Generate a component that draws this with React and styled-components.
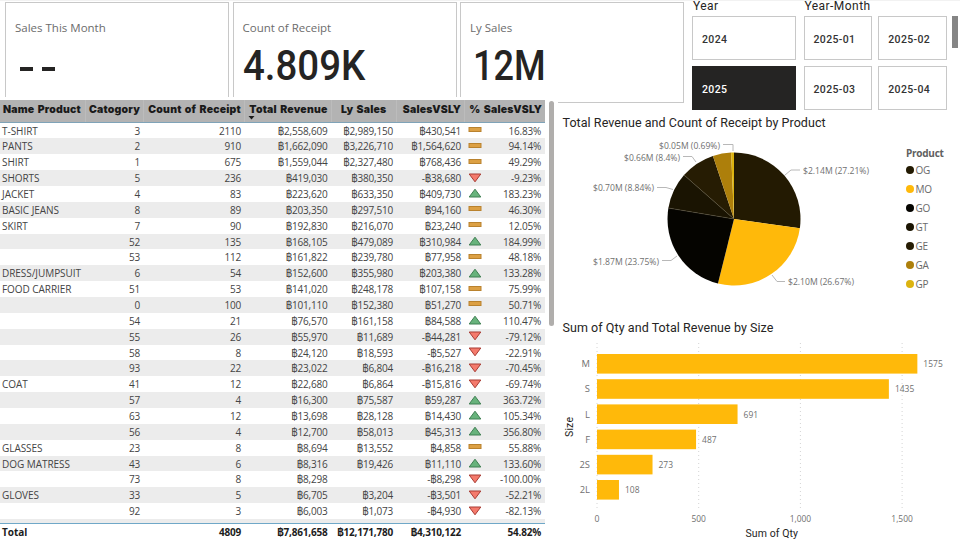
import React from "react";
import styled, { createGlobalStyle, css } from "styled-components";

const DIN = `Roboto, "Liberation Sans", sans-serif`;
const BODY = `"Open Sans", "Noto Sans", Inter, "DejaVu Sans", sans-serif`;

const GlobalStyle = createGlobalStyle`
  * {
    box-sizing: border-box;
  }
  body {
    margin: 0;
    background: #fff;
    overflow: hidden;
  }
`;

const Page = styled.main`
  width: 960px;
  height: 541px;
  display: flex;
  flex-direction: column;
  overflow: hidden;
  background: #fff;
  border-top: 1px solid #f2f2f2;
  font-family: ${BODY};
  color: #444;
`;

const TopBar = styled.div`
  display: flex;
  flex: none;
  height: 113px;
`;

const Cards = styled.section`
  display: flex;
  gap: 3.5px;
  width: 692px;
  height: 102px;
  padding: 1px 0 0 5px;
`;

const Card = styled.div`
  width: 224px;
  height: 101px;
  border: 1px solid #c8c8c8;
  padding: 15px 0 0 9px;
  background: #fff;
`;

const CardLabel = styled.div`
  font-size: 11.5px;
  line-height: 20px;
  color: #6c6c6c;
  white-space: nowrap;
`;

const CardValue = styled.div`
  font-family: ${DIN};
  font-weight: 500;
  font-size: 42px;
  line-height: 50px;
  margin: 3px 0 0 ${(p) => p.$indent || "0"};
  color: #252423;
  white-space: pre;
  transform: scaleX(${(p) => p.$stretch || 1});
  transform-origin: left center;
`;

const Dashes = styled.div`
  display: flex;
  gap: 9.5px;
  padding: 29px 0 0 5px;
`;

const Dash = styled.span`
  width: 12.5px;
  height: 4px;
  background: #252423;
`;

const Slicer = styled.section`
  width: ${(p) => p.$width};
  margin-right: ${(p) => p.$gap || "0"};
`;

const SlicerTitle = styled.h2`
  margin: 0 0 0 1px;
  height: 15px;
  font-family: ${DIN};
  font-weight: 400;
  font-size: 12px;
  line-height: 11px;
  letter-spacing: 0.45px;
  color: #252423;
  white-space: nowrap;
`;

const Tiles = styled.div`
  display: grid;
  grid-template-columns: repeat(${(p) => p.$cols}, 1fr);
  grid-auto-rows: 44px;
  gap: 6px;
`;

const Tile = styled.button`
  border: 1px solid #c8c8c8;
  margin: 0;
  padding: 2px 0 0 9px;
  background: #fff;
  text-align: left;
  font-family: ${DIN};
  font-weight: 500;
  font-size: 10.5px;
  letter-spacing: 0.35px;
  color: #333;

  ${(p) =>
    p.$active &&
    css`
      background: #252423;
      border-color: #252423;
      color: #fff;
    `}
`;

const SlicerScroll = styled.div`
  width: 6px;
  height: 32px;
  margin: 15px 0 0 5px;
  background: #858585;
`;

const Main = styled.div`
  display: flex;
  flex: none;
  height: 443px;
  margin-top: -17px;
`;

const TablePanel = styled.section`
  position: relative;
  display: flex;
  width: 558px;
  padding-top: 3px;
  background: #fff;
`;

const Table = styled.div`
  display: flex;
  flex-direction: column;
  width: 545px;
  height: 440px;
`;

const columns = css`
  display: grid;
  grid-template-columns: 86px 58px 101px 86.5px 65.5px 68px 80px;
`;

const HeadRow = styled.div`
  ${columns}
  flex: none;
  height: 22.5px;
  background: #b3b3b3;
  border-bottom: 1.5px solid #7fa3b8;
`;

const HeadCell = styled.div`
  padding: 0 3px 0 3px;
  border-right: 1px solid #bcbcbc;
  font-family: Inter, "Liberation Sans", sans-serif;
  font-weight: 900;
  font-size: 10.5px;
  line-height: 20px;
  letter-spacing: 0.2px;
  word-spacing: 1px;
  text-align: ${(p) => p.$align || "right"};
  color: #1a1a1a;
  white-space: nowrap;

  &:last-child {
    border-right: 0;
  }
`;

const SortMark = styled.svg`
  display: block;
  width: 7px;
  height: 4px;
  margin-top: -4px;
`;

const Rows = styled.div`
  flex: none;
  height: 401.5px;
  overflow: hidden;
  border-bottom: 1px solid #6fa8c8;
`;

const Row = styled.div`
  ${columns}
  height: 15.87px;
  background: ${(p) => (p.$shade ? "#ececec" : "#fff")};
`;

const Cell = styled.div`
  display: flex;
  align-items: center;
  justify-content: ${(p) => (p.$left ? "flex-start" : "flex-end")};
  padding: 1px ${(p) => p.$right || "4px"} 0 2px;
  font-size: 10px;
  line-height: 15px;
  letter-spacing: ${(p) => (p.$left ? "-0.05px" : "-0.2px")};
  white-space: nowrap;
`;

const Trend = styled.svg`
  flex: none;
  width: 14px;
  height: 10px;
  margin: -2px auto 0 1px;
`;

const TotalRow = styled.div`
  ${columns}
  height: 16px;
  font-weight: 700;
  color: #1c1c1c;
`;

const TableScroll = styled.div`
  width: 5px;
  height: 225px;
  margin: 1px 0 0 4px;
  border-radius: 3px;
  background: #b0aeac;
`;

const Charts = styled.section`
  width: 402px;
  padding-top: 17px;
`;

const ChartTitle = styled.h2`
  margin: 0 0 0 4.5px;
  font-family: ${DIN};
  font-weight: 400;
  font-size: 12.5px;
  height: 18px;
  line-height: 18px;
  letter-spacing: 0.06px;
  color: #252423;
  white-space: nowrap;
`;

const PieRow = styled.div`
  display: flex;
  height: 187px;
`;

const PieSvg = styled.svg`
  display: block;
  width: 340px;
  height: 160px;
`;

const Legend = styled.div`
  padding: 11px 0 0 8px;
  color: #6a6a6a;
`;

const LegendTitle = styled.div`
  font-size: 10px;
  font-weight: 700;
  line-height: 20px;
  height: 17px;
  letter-spacing: -0.25px;
  color: #606060;
`;

const LegendItem = styled.div`
  display: flex;
  align-items: center;
  gap: 1.5px;
  height: 19.15px;
  font-size: 10px;
  letter-spacing: -0.3px;
`;

const Dot = styled.i`
  width: 8px;
  height: 8px;
  border-radius: 50%;
  background: ${(p) => p.$color};
`;

const BarSvg = styled.svg`
  display: block;
  width: 402px;
  height: 204px;
`;

const SvgLabel = styled.text`
  font-family: ${BODY};
  font-size: 9.4px;
  fill: #707070;
`;

const AxisTitle = styled.text`
  font-family: ${DIN};
  font-size: 10.5px;
  fill: #252423;
`;

const rows = [
  ["T-SHIRT", "3", "2110", "฿2,558,609", "฿2,989,150", "฿430,541", "flat", "16.83%"],
  ["PANTS", "2", "910", "฿1,662,090", "฿3,226,710", "฿1,564,620", "flat", "94.14%"],
  ["SHIRT", "1", "675", "฿1,559,044", "฿2,327,480", "฿768,436", "flat", "49.29%"],
  ["SHORTS", "5", "236", "฿419,030", "฿380,350", "-฿38,680", "down", "-9.23%"],
  ["JACKET", "4", "83", "฿223,620", "฿633,350", "฿409,730", "up", "183.23%"],
  ["BASIC JEANS", "8", "89", "฿203,350", "฿297,510", "฿94,160", "flat", "46.30%"],
  ["SKIRT", "7", "90", "฿192,830", "฿216,070", "฿23,240", "flat", "12.05%"],
  ["", "52", "135", "฿168,105", "฿479,089", "฿310,984", "up", "184.99%"],
  ["", "53", "112", "฿161,822", "฿239,780", "฿77,958", "flat", "48.18%"],
  ["DRESS/JUMPSUIT", "6", "54", "฿152,600", "฿355,980", "฿203,380", "up", "133.28%"],
  ["FOOD CARRIER", "51", "53", "฿141,020", "฿248,178", "฿107,158", "flat", "75.99%"],
  ["", "0", "100", "฿101,110", "฿152,380", "฿51,270", "flat", "50.71%"],
  ["", "54", "21", "฿76,570", "฿161,158", "฿84,588", "up", "110.47%"],
  ["", "55", "26", "฿55,970", "฿11,689", "-฿44,281", "down", "-79.12%"],
  ["", "58", "8", "฿24,120", "฿18,593", "-฿5,527", "down", "-22.91%"],
  ["", "93", "22", "฿23,022", "฿6,804", "-฿16,218", "down", "-70.45%"],
  ["COAT", "41", "12", "฿22,680", "฿6,864", "-฿15,816", "down", "-69.74%"],
  ["", "57", "4", "฿16,300", "฿75,587", "฿59,287", "up", "363.72%"],
  ["", "63", "12", "฿13,698", "฿28,128", "฿14,430", "up", "105.34%"],
  ["", "56", "4", "฿12,700", "฿58,013", "฿45,313", "up", "356.80%"],
  ["GLASSES", "23", "8", "฿8,694", "฿13,552", "฿4,858", "flat", "55.88%"],
  ["DOG MATRESS", "43", "6", "฿8,316", "฿19,426", "฿11,110", "up", "133.60%"],
  ["", "73", "8", "฿8,298", "", "-฿8,298", "down", "-100.00%"],
  ["GLOVES", "33", "5", "฿6,705", "฿3,204", "-฿3,501", "down", "-52.21%"],
  ["", "92", "3", "฿6,003", "฿1,073", "-฿4,930", "down", "-82.13%"],
];

const slices = [
  { name: "OG", share: 27.21, color: "#231a02" },
  { name: "MO", share: 26.67, color: "#ffb90a" },
  { name: "GO", share: 23.75, color: "#050400" },
  { name: "GT", share: 8.84, color: "#1a1402" },
  { name: "GE", share: 8.4, color: "#261c03" },
  { name: "GA", share: 4.44, color: "#ad7f0b" },
  { name: "GP", share: 0.69, color: "#dcb30f" },
];

const pieLabels = [
  { text: "$2.14M (27.21%)", x: 803, y: 173.7, w: 66, line: "785,175 791,170 800,170" },
  { text: "$2.10M (26.67%)", x: 788, y: 285.2, w: 66, line: "772,275 777,281.5 785,281.5" },
  { text: "$1.87M (23.75%)", x: 593, y: 264.5, w: 66, line: "677,256 671,260.5 662,260.5" },
  { text: "$0.70M (8.84%)", x: 593, y: 191.2, w: 61, line: "673,189.5 666,187.5 657,187.5" },
  { text: "$0.66M (8.4%)", x: 624, y: 161, w: 56, line: "696,162 692,156.5 683,156.5" },
  { text: "$0.05M (0.69%)", x: 659, y: 148.5, w: 61, line: "733,151 733,144.5 723,144.5" },
];

const sizes = [
  { name: "M", qty: 1575 },
  { name: "S", qty: 1435 },
  { name: "L", qty: 691 },
  { name: "F", qty: 487 },
  { name: "2S", qty: 273 },
  { name: "2L", qty: 108 },
];

const ticks = [
  { value: 0, label: "0", w: 5 },
  { value: 500, label: "500", w: 14.5 },
  { value: 1000, label: "1,000", w: 21.5 },
  { value: 1500, label: "1,500", w: 21.5 },
];

const TrendIcon = ({ kind }) => (
  <Trend viewBox="0 0 14 10">
    {kind === "up" && (
      <path d="M7 1.2 L12.8 9 H1.2 Z" fill="#68b37c" stroke="#3f7f52" strokeWidth="1" />
    )}
    {kind === "down" && (
      <path d="M7 8.8 L1.2 1 H12.8 Z" fill="#f47a6c" stroke="#a83a32" strokeWidth="1" />
    )}
    {kind === "flat" && (
      <rect x="1" y="2.5" width="12" height="4" fill="#dca044" stroke="#b9822e" strokeWidth="1" />
    )}
  </Trend>
);

const point = (turn, r) => {
  const a = turn * 2 * Math.PI;
  return `${(734 + r * Math.sin(a)).toFixed(2)} ${(219 - r * Math.cos(a)).toFixed(2)}`;
};

const Pie = () => {
  let start = 0;
  return (
    <PieSvg viewBox="558 132 340 160">
      {slices.map((s) => {
        const end = start + s.share / 100;
        const d = `M734 219 L${point(start, 66.5)} A66.5 66.5 0 0 1 ${point(end, 66.5)} Z`;
        start = end;
        return <path key={s.name} d={d} fill={s.color} />;
      })}
      <path
        d={`M734 219 L${point(0.7763, 66.5)} M734 219 L${point(0.8647, 66.5)}`}
        stroke="#5c543c"
        strokeWidth="0.5"
      />
      {pieLabels.map((l) => (
        <g key={l.text}>
          <polyline points={l.line} fill="none" stroke="#b8b8b8" strokeWidth="1" />
          <SvgLabel x={l.x} y={l.y} textLength={l.w} lengthAdjust="spacingAndGlyphs">
            {l.text}
          </SvgLabel>
        </g>
      ))}
    </PieSvg>
  );
};

const Bars = () => {
  const scale = 0.2034;
  return (
    <BarSvg viewBox="558 337 402 204">
      {ticks.map((t) => {
        const x = 597 + t.value * scale;
        return (
          <g key={t.value}>
            <line x1={x} x2={x} y1="343" y2="510" stroke="#d4d4d4" strokeDasharray="1 3" />
            <SvgLabel
              x={x - t.w / 2}
              y="521.5"
              textLength={t.w}
              lengthAdjust="spacingAndGlyphs"
            >
              {t.label}
            </SvgLabel>
          </g>
        );
      })}
      {sizes.map((s, i) => {
        const y = 354 + i * 25.2;
        const end = 597 + s.qty * scale;
        return (
          <g key={s.name}>
            <rect x="597" y={y} width={s.qty * scale} height="19.6" fill="#ffb90a" />
            <SvgLabel x="590" y={y + 13.2} textAnchor="end">
              {s.name}
            </SvgLabel>
            <SvgLabel
              x={end + 6}
              y={y + 13.2}
              textLength={String(s.qty).length * 4.85}
              lengthAdjust="spacingAndGlyphs"
            >
              {s.qty}
            </SvgLabel>
          </g>
        );
      })}
      <AxisTitle x="745.5" y="536.5" textLength="52.5">
        Sum of Qty
      </AxisTitle>
      <AxisTitle transform="translate(572.5 437) rotate(-90)" textLength="20">
        Size
      </AxisTitle>
    </BarSvg>
  );
};

const App = () => {
  return (
    <Page>
      <GlobalStyle />
      <TopBar>
        <Cards>
          <Card>
            <CardLabel>Sales This Month</CardLabel>
            <Dashes>
              <Dash />
              <Dash />
            </Dashes>
          </Card>
          <Card>
            <CardLabel>Count of Receipt</CardLabel>
            <CardValue $stretch={0.915}>4.809K</CardValue>
          </Card>
          <Card>
            <CardLabel>Ly Sales</CardLabel>
            <CardValue $stretch={0.86} $indent="3px">
              12M
            </CardValue>
          </Card>
        </Cards>
        <Slicer $width="103.5px" $gap="8px">
          <SlicerTitle>Year</SlicerTitle>
          <Tiles $cols={1}>
            <Tile>2024</Tile>
            <Tile $active>2025</Tile>
          </Tiles>
        </Slicer>
        <Slicer $width="143.5px">
          <SlicerTitle>Year-Month</SlicerTitle>
          <Tiles $cols={2}>
            <Tile>2025-01</Tile>
            <Tile>2025-02</Tile>
            <Tile>2025-03</Tile>
            <Tile>2025-04</Tile>
          </Tiles>
        </Slicer>
        <SlicerScroll />
      </TopBar>
      <Main>
        <TablePanel>
          <Table>
            <HeadRow>
              <HeadCell $align="left">Name Product</HeadCell>
              <HeadCell>Catogory</HeadCell>
              <HeadCell>Count of Receipt</HeadCell>
              <HeadCell>
                Total Revenue
                <SortMark viewBox="0 0 7 4">
                  <path d="M0.5 0 H6.5 L3.5 3.5 Z" fill="#1a1a1a" />
                </SortMark>
              </HeadCell>
              <HeadCell $align="center">Ly Sales</HeadCell>
              <HeadCell>SalesVSLY</HeadCell>
              <HeadCell>% SalesVSLY</HeadCell>
            </HeadRow>
            <Rows>
              {rows.map(([name, cat, count, revenue, ly, diff, trend, pct], i) => (
                <Row key={i} $shade={i % 2 === 1}>
                  <Cell $left>{name}</Cell>
                  <Cell>{cat}</Cell>
                  <Cell>{count}</Cell>
                  <Cell>{revenue}</Cell>
                  <Cell>{ly}</Cell>
                  <Cell>{diff}</Cell>
                  <Cell>
                    <TrendIcon kind={trend} />
                    {pct}
                  </Cell>
                </Row>
              ))}
              <Row $shade />
            </Rows>
            <TotalRow>
              <Cell $left>Total</Cell>
              <Cell />
              <Cell>4809</Cell>
              <Cell>฿7,861,658</Cell>
              <Cell>฿12,171,780</Cell>
              <Cell>฿4,310,122</Cell>
              <Cell>54.82%</Cell>
            </TotalRow>
          </Table>
          <TableScroll />
        </TablePanel>
        <Charts>
          <ChartTitle>Total Revenue and Count of Receipt by Product</ChartTitle>
          <PieRow>
            <Pie />
            <Legend>
              <LegendTitle>Product</LegendTitle>
              {slices.map((s) => (
                <LegendItem key={s.name}>
                  <Dot $color={s.color} />
                  {s.name}
                </LegendItem>
              ))}
            </Legend>
          </PieRow>
          <ChartTitle>Sum of Qty and Total Revenue by Size</ChartTitle>
          <Bars />
        </Charts>
      </Main>
    </Page>
  );
};

export default App;
